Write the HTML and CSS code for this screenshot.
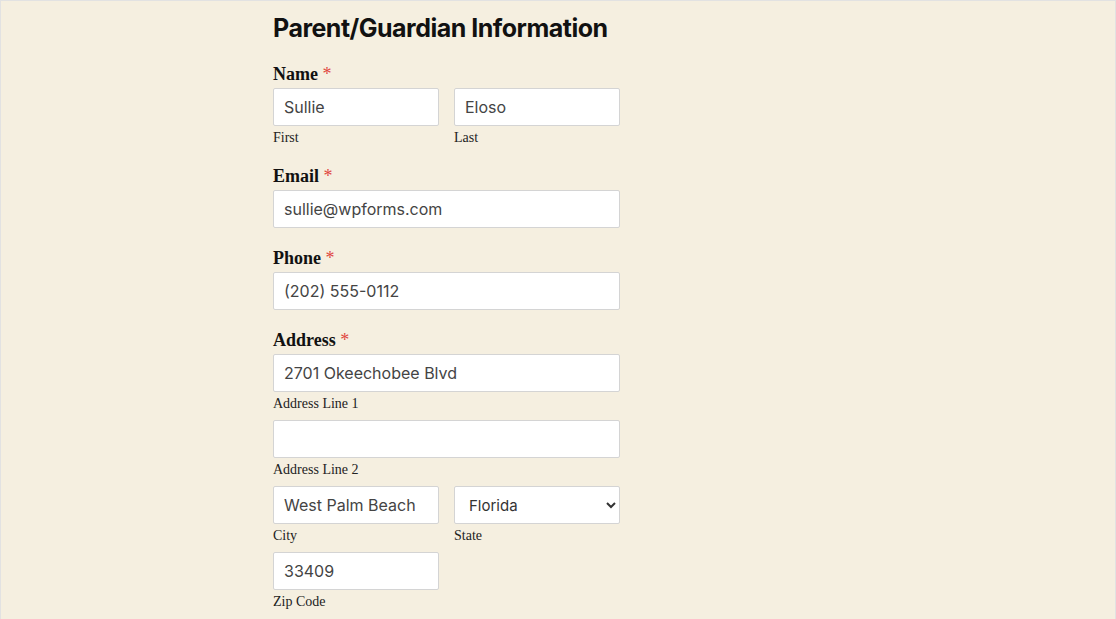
FILE: index.html
```html
<!DOCTYPE html>
<html lang="en">
<head>
    <meta charset="UTF-8">
    <meta name="viewport" content="width=device-width, initial-scale=1.0">
    <title>Parent/Guardian Information</title>
    <link rel="stylesheet" href="styles.css">
</head>
<body>
    <div class="page">
        <form class="form-container">
            <h2 class="section-title">Parent/Guardian Information</h2>

            <!-- Name -->
            <div class="field">
                <label class="field-label">Name <span class="required">*</span></label>
                <div class="field-row">
                    <div class="subfield">
                        <input type="text" class="field-input" value="Sullie">
                        <span class="sublabel">First</span>
                    </div>
                    <div class="subfield">
                        <input type="text" class="field-input" value="Eloso">
                        <span class="sublabel">Last</span>
                    </div>
                </div>
            </div>

            <!-- Email -->
            <div class="field">
                <label class="field-label">Email <span class="required">*</span></label>
                <input type="email" class="field-input" value="sullie@wpforms.com">
            </div>

            <!-- Phone -->
            <div class="field">
                <label class="field-label">Phone <span class="required">*</span></label>
                <input type="tel" class="field-input" value="(202) 555-0112">
            </div>

            <!-- Address -->
            <div class="field">
                <label class="field-label">Address <span class="required">*</span></label>
                <div class="subfield">
                    <input type="text" class="field-input" value="2701 Okeechobee Blvd">
                    <span class="sublabel">Address Line 1</span>
                </div>
                <div class="subfield">
                    <input type="text" class="field-input" value="">
                    <span class="sublabel">Address Line 2</span>
                </div>
                <div class="field-row">
                    <div class="subfield">
                        <input type="text" class="field-input" value="West Palm Beach">
                        <span class="sublabel">City</span>
                    </div>
                    <div class="subfield">
                        <select class="field-input field-select">
                            <option>Florida</option>
                        </select>
                        <span class="sublabel">State</span>
                    </div>
                </div>
                <div class="field-row">
                    <div class="subfield">
                        <input type="text" class="field-input" value="33409">
                        <span class="sublabel">Zip Code</span>
                    </div>
                    <div class="subfield"></div>
                </div>
            </div>
        </form>
    </div>
</body>
</html>
```

FILE: styles.css
```css
* {
    box-sizing: border-box;
}
html, body {
    margin: 0;
    padding: 0;
    height: 100%;
}
body {
    background-color: #f5efe0;
    overflow: hidden;
}
.page {
    min-height: 100%;
    border: 1px solid #e2e2e2;
    border-bottom: none;
    background-color: #f5efe0;
}

/* Form container */
.form-container {
    width: 570px;
    margin: 0 auto;
    padding-top: 11px;
}
.section-title {
    font-family: Inter, 'Liberation Sans', sans-serif;
    font-size: 25px;
    line-height: 32px;
    font-weight: 700;
    letter-spacing: -0.5px;
    color: #111;
    margin: 0 0 19px 0;
}

/* Fields */
.field {
    width: 347px;
    margin-bottom: 19px;
}
.field-label {
    display: block;
    font-family: 'Liberation Serif', 'Times New Roman', serif;
    font-size: 18px;
    line-height: 22px;
    font-weight: 700;
    color: #111;
    margin-bottom: 3px;
}
.required {
    color: #e0463f;
    font-weight: 400;
}
.field-row {
    display: flex;
    gap: 15px;
}
.field-row .subfield {
    flex: 1;
}
.subfield {
    margin-bottom: 8px;
}
.field > .subfield:last-child,
.field-row:last-child .subfield {
    margin-bottom: 0;
}
.field-input {
    display: block;
    width: 100%;
    height: 38px;
    padding: 0 10px;
    background-color: white;
    border: 1px solid #d4d4d4;
    border-radius: 2px;
    font-family: Inter, 'Liberation Sans', sans-serif;
    font-size: 16px;
    color: #444;
    outline: none;
}
.field-select {
    padding: 0 6px 0 10px;
    font-size: 15px;
    color: #333;
}
.sublabel {
    display: block;
    margin-top: 3px;
    font-family: 'Liberation Serif', 'Times New Roman', serif;
    font-size: 14px;
    line-height: 17px;
    color: #222;
}
```
